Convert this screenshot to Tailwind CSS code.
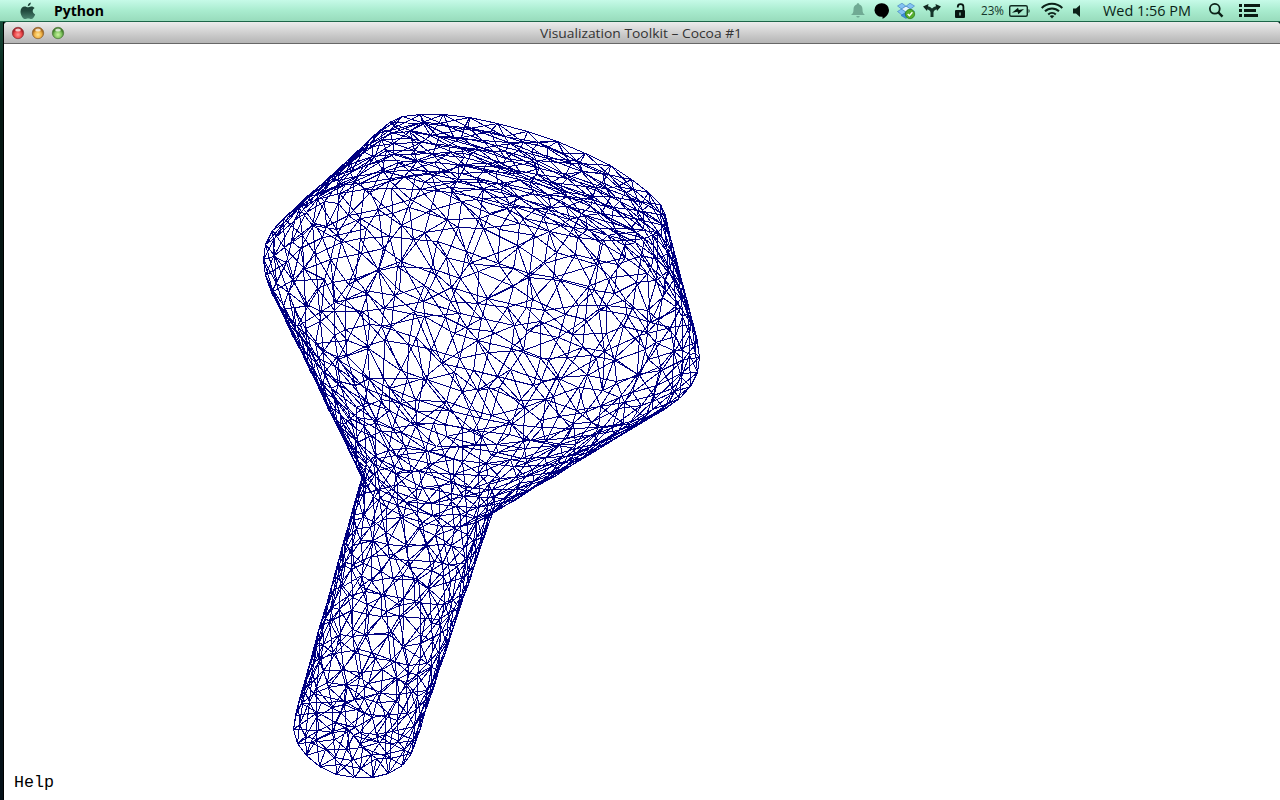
<!DOCTYPE html>
<html lang="en">
<head>
<meta charset="utf-8">
<title>Visualization Toolkit</title>
<script src="https://cdn.jsdelivr.net/npm/@tailwindcss/browser@4"></script>
</head>
<body class="w-[1280px] h-[800px] overflow-hidden bg-[#06261f] font-['Open_Sans',sans-serif]">
<div class="flex flex-col h-[800px]">
  <header class="relative h-[22px] shrink-0 flex items-center justify-between bg-linear-to-b from-[#c6fae8] via-[#a9eccf] to-[#98dcbc] border-b border-[#1d6549] pl-[20px] pr-[20px] text-black">
    <div class="flex items-center gap-[18px]">
      <svg class="w-4 h-[18px]" viewBox="0 0 16 18"><defs><linearGradient id="ap" x2="0" y2="1"><stop stop-color="#183c31"/><stop offset=".5" stop-color="#214a3e"/><stop offset="1" stop-color="#4b8571"/></linearGradient></defs><path fill="url(#ap)" d="M10.8 0.5c.2 1.7-1.2 3.6-3 3.8-.2-1.800 1.300-3.500 3-3.800zM8 5.300c.9 0 1.800-.9 3.300-.9 1.400 0 2.600.7 3.300 1.700-2.800 1.700-2.300 5.200.6 6.300-.7 2-2.300 4.700-3.900 4.700-1.200 0-1.700-.7-3.100-.7s-2 .7-3.100.7C3 17.100.5 13.300.5 9.800c0-3.400 2.100-5.300 4.200-5.300 1.400 0 2.400.8 3.300.8z"/></svg>
      <svg class="w-[52px] h-5 block" viewBox="0 0 52 20"><text x="0" y="15" font-size="14" font-weight="700" textLength="50" lengthAdjust="spacingAndGlyphs">Python</text></svg>
    </div>
    <div class="flex items-center">
      <svg class="w-[130px] h-[22px]" viewBox="850 0 130 22">
        <path fill="#70aa94" d="M858 3.200c1 0 1.300.6 1.300 1.300 2.500.8 3.200 2.700 3.200 5 0 3.300.8 4.100 2.500 5.500h-14c1.700-1.400 2.500-2.200 2.500-5.500 0-2.300.7-4.200 3.200-5 0-.7.3-1.300 1.300-1.300zM856.300 16h3.400c-.2 2-3.200 2-3.400 0z"/>
        <path fill="#000" d="M882 3.200a7 6.800 0 0 1 7 6.800c0 4-3.500 7.500-6.500 8.700v-2a7 6.800 0 1 1-.5-13.500z"/>
        <g fill="#3d8bdc" stroke="#286ab3" stroke-width=".5"><path fill="#83c1f3" d="M897.500 6l4.500-2.800 4 3-4.500 2.800zM906 6.200l4-3 4.500 2.800-4 3zM897.500 11.500l4-2.500 4.500 3-4 3zM906 12l4.500-3 4 2.500-4.500 3.500z"/><path fill="#e4f5ff" d="M901.500 9l4.500-2.800 4.500 2.800-4.500 3z"/><path d="M901 15.500l5-3 4 3-4 3z"/></g>
        <circle cx="910" cy="14" r="4.700" fill="#55ad2c" stroke="#277711" stroke-width=".7"/><path d="M907.700 14l1.700 1.800 3-3.500" fill="none" stroke="#fff" stroke-width="1.400"/>
        <path d="M932 17V12.500c0-2.500-1.500-4-5-5M932 12.500c0-2.500 1.500-4 5-5" fill="none" stroke="#143329" stroke-width="3"/><path fill="#10271f" d="M923 6.500l5.500-2.500-1.500 7zM941 6.500l-5.500-2.500 1.500 7z"/>
        <rect x="955" y="10" width="10" height="8" rx="1" fill="#071510"/><path d="M957.800 7.500V6.700a2.800 2.500 0 0 1 5.600 0v3.800" fill="none" stroke="#071510" stroke-width="1.800"/><path d="M960 12.500v3" stroke="#9adbc0" stroke-width="1.300"/>
      </svg>
      <svg class="w-[280px] h-[22px]" viewBox="980 0 280 22">
        <text x="981" y="15" font-size="12" fill="#15362a" textLength="23" lengthAdjust="spacingAndGlyphs">23%</text>
        <rect x="1009.700" y="5.700" width="17.600" height="10.600" rx="1.500" fill="none" stroke="#122b22" stroke-width="1.400"/><path d="M1028.500 9c1.500.5 1.500 3.500 0 4z" fill="#122b22"/><path d="M1012 12.800l6-5 .8 2.300 5.200-1-5.600 5.100-.9-2.400z" fill="#081a13"/>
        <g fill="none" stroke="#0c2118" stroke-width="2"><path d="M1041.700 8a14.500 14.500 0 0 1 20.600 0M1045 11.300a10 10 0 0 1 14 0M1048.200 14.500a5.500 5.500 0 0 1 7.600 0"/></g><path fill="#0c2118" d="M1052 18.500l-2.300-2.400q2.300-1.900 4.600 0z"/>
        <path fill="#0c2118" d="M1073 8.500h3l4-3.500v12l-4-3.500h-3z"/>
        <text x="1103" y="15.500" font-size="14" fill="#0a1f17" textLength="88" lengthAdjust="spacingAndGlyphs">Wed 1:56 PM</text>
        <circle cx="1214.800" cy="8.800" r="4.900" fill="none" stroke="#0c2118" stroke-width="1.800"/><path d="M1218 12l4.500 4.700" stroke="#0c2118" stroke-width="2.400"/>
        <path d="M1239 5.500h3M1239 10.500h3M1239 15.500h3M1244 5.500h16M1244 10.500h12M1244 15.500h14" stroke="#0a1a12" stroke-width="2.800"/>
      </svg>
    </div>
  </header>
  <main class="flex flex-1 min-h-0">
    <div class="w-1 shrink-0 bg-linear-to-b from-[#164b39] via-[#051712] via-10% to-[#041018] border-r border-black"></div>
    <section class="flex-1 flex flex-col bg-white rounded-t-[4px] overflow-hidden">
      <div class="h-[22px] shrink-0 flex items-center bg-linear-to-b from-[#ececec] to-[#b5b5b5] border-b border-[#676767]">
        <svg class="w-[70px] h-[21px]" viewBox="4 22 70 21">
          <defs>
            <radialGradient id="r" cy=".65"><stop stop-color="#ff9a96"/><stop offset=".6" stop-color="#ee4b4d"/><stop offset="1" stop-color="#a91f27"/></radialGradient>
            <radialGradient id="y" cy=".65"><stop stop-color="#ffe794"/><stop offset=".6" stop-color="#f2b549"/><stop offset="1" stop-color="#a86b20"/></radialGradient>
            <radialGradient id="g" cy=".65"><stop stop-color="#cbf59f"/><stop offset=".6" stop-color="#84c763"/><stop offset="1" stop-color="#417f2b"/></radialGradient>
          </defs>
          <g stroke-width=".7"><circle cx="18" cy="33" r="5.700" fill="url(#r)" stroke="#8b3035"/><circle cx="38" cy="33" r="5.700" fill="url(#y)" stroke="#8d6029"/><circle cx="58" cy="33" r="5.700" fill="url(#g)" stroke="#4c7838"/></g>
          <g fill="#fff" fill-opacity=".75"><ellipse cx="18" cy="30" rx="2.800" ry="1.500"/><ellipse cx="38" cy="30" rx="2.800" ry="1.500"/><ellipse cx="58" cy="30" rx="2.800" ry="1.500"/></g>
        </svg>
        <svg class="ml-[462px] w-[210px] h-[21px]" viewBox="536 22 210 21"><text x="540" y="38" font-size="13" fill="#333333" textLength="202" lengthAdjust="spacingAndGlyphs">Visualization Toolkit – Cocoa #1</text></svg>
      </div>
      <div class="relative flex-1">
        <svg class="block w-[1276px] h-[756px]" viewBox="4 44 1276 756" shape-rendering="crispEdges"><path id="mesh" fill="none" stroke="#000080" stroke-width="1"/></svg>
        <span class="absolute left-[10px] bottom-[7px] text-[16.67px] leading-5 font-['Liberation_Mono',monospace] text-black">Help</span>
      </div>
    </section>
  </main>
</div>
<script>
// Triangulated surface of revolution: rings hold centre, half axis u, half axis v.
let seed = 41;
const rnd = () => (seed = (seed * 16807) % 2147483647) / 2147483647 - 0.5;
const A = [354, 731, 59.500, 16, 14, -44];
const B = [428.500, 487, 65, 19.500, 11, -34];
const C = [481, 308, 216, 64, 32, -102];
const D = [523, 177, 141, 48, 19, -41];
const mix = (p, q, t) => p.map((v, i) => v + (q[i] - v) * t);
const rows = [];
function span(p, q, n, np, nq) {
  for (let i = 0; i <= n; i++) {
    if (i === 0 && rows.length) continue;
    const t = i / n, cnt = Math.max(3, Math.round(np + (nq - np) * t));
    const fixed = i === 0 || i === n, pts = [], off = rows.length % 2 * 0.5;
    for (let k = 0; k < cnt; k++) {
      const a = (k + off + (fixed ? 0 : rnd() * 0.5)) / cnt * Math.PI * 2;
      const r = mix(p, q, fixed ? t : t + rnd() * 0.65 / n);
      pts.push([a, r[0] + r[2] * Math.cos(a) + r[4] * Math.sin(a), r[1] + r[3] * Math.cos(a) + r[5] * Math.sin(a)]);
    }
    rows.push(pts);
  }
}
const centre = c => [c[0], c[1], c[2] * 0.08, c[3] * 0.08, c[4] * 0.08, c[5] * 0.08];
span(centre(A), A, 3, 4, 21);
span(A, B, 13, 21, 21);
span(B, C, 10, 22, 44);
span(C, D, 8, 44, 30);
span(D, centre(D), 5, 30, 5);
let d = '';
const line = (p, q) => { d += 'M' + (Math.round(p[1]) + 0.5) + ' ' + (Math.round(p[2]) + 0.5) + 'L' + (Math.round(q[1]) + 0.5) + ' ' + (Math.round(q[2]) + 0.5); };
rows.forEach((r, j) => {
  r.forEach((p, k) => line(p, r[(k + 1) % r.length]));
  const s = rows[j + 1];
  if (!s) return;
  let a = 0, b = 0;
  const at = (w, i) => w[i % w.length][0] + Math.floor(i / w.length) * Math.PI * 2;
  while (a < r.length || b < s.length) {
    line(r[a % r.length], s[b % s.length]);
    if (b >= s.length || (a < r.length && at(r, a + 1) < at(s, b + 1))) a++; else b++;
  }
});
document.getElementById('mesh').setAttribute('d', d);
</script>
</body>
</html>
